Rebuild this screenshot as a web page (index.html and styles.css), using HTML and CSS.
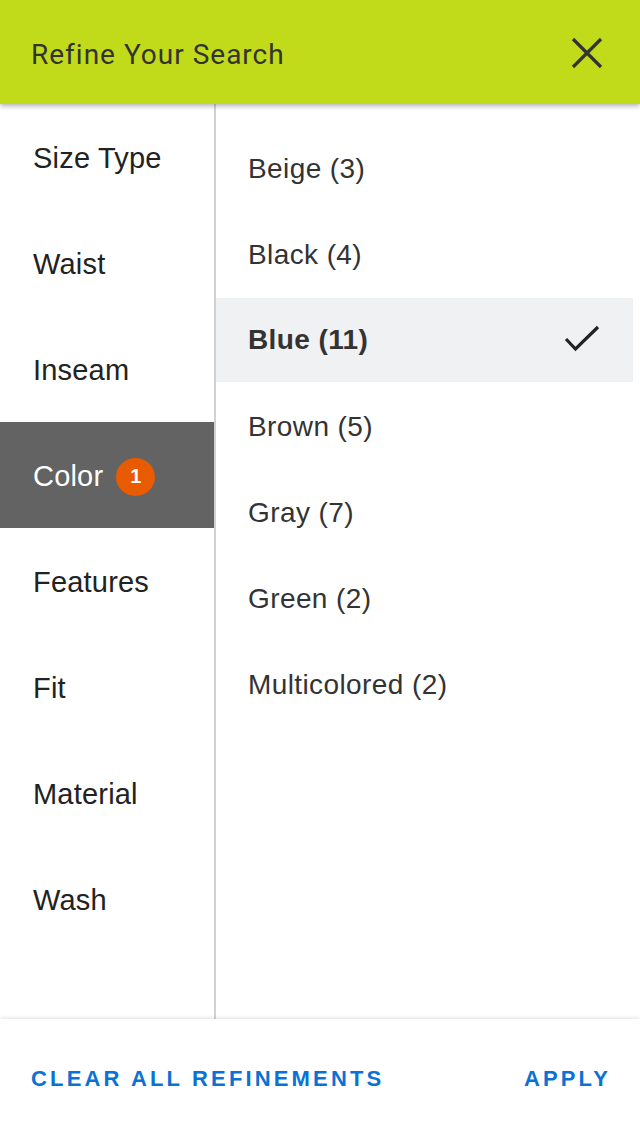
FILE: index.html
```html
<!DOCTYPE html>
<html>
<head>
<meta charset="utf-8">
<link rel="stylesheet" href="styles.css">
</head>
<body>
<div class="app">
  <header class="header">
    <h1 class="title">Refine Your Search</h1>
    <button class="close" aria-label="Close">
      <svg width="32" height="32" viewBox="0 0 32 32"><path d="M2 2 L30 30 M30 2 L2 30" stroke="#333" stroke-width="3.2" fill="none"/></svg>
    </button>
  </header>
  <main class="main">
    <nav class="cats">
      <div class="cat">Size Type</div>
      <div class="cat">Waist</div>
      <div class="cat">Inseam</div>
      <div class="cat active">Color <span class="badge">1</span></div>
      <div class="cat">Features</div>
      <div class="cat">Fit</div>
      <div class="cat">Material</div>
      <div class="cat">Wash</div>
    </nav>
    <section class="opts">
      <div class="opt">Beige (3)</div>
      <div class="opt">Black (4)</div>
      <div class="opt selected"><span>Blue (11)</span>
        <svg class="check" width="36" height="28" viewBox="0 0 36 28"><path d="M2 14 L11.5 24 L34 2" stroke="#222" stroke-width="3.2" fill="none"/></svg>
      </div>
      <div class="opt">Brown (5)</div>
      <div class="opt">Gray (7)</div>
      <div class="opt">Green (2)</div>
      <div class="opt">Multicolored (2)</div>
    </section>
  </main>
  <footer class="footer">
    <a class="action">CLEAR ALL REFINEMENTS</a>
    <a class="action">APPLY</a>
  </footer>
</div>
</body>
</html>
```
FILE: styles.css
```css
* { box-sizing: border-box; }
html, body { margin: 0; padding: 0; }
body {
  width: 640px;
  height: 1136px;
  font-family: "Liberation Sans", Arial, sans-serif;
  background: #fff;
  overflow: hidden;
}
.app {
  display: flex;
  flex-direction: column;
  height: 1136px;
}
.header {
  height: 104px;
  flex: none;
  background: #c1db1a;
  display: flex;
  align-items: center;
  justify-content: space-between;
  padding: 0 37px 0 31px;
  box-shadow: 0 2px 5px rgba(0,0,0,0.3);
  position: relative;
  z-index: 2;
}
.title {
  margin: 0;
  font-family: Roboto, "Liberation Sans", sans-serif;
  font-weight: 400;
  font-size: 28px;
  color: #333;
  letter-spacing: 1px;
  padding-top: 4px;
}
.close {
  border: 0;
  background: none;
  padding: 0;
  width: 32px;
  height: 32px;
  display: flex;
  margin-top: 1px;
}
.main {
  flex: 1;
  display: flex;
  min-height: 0;
}
.cats {
  width: 216px;
  flex: none;
  border-right: 2px solid #d2d2d2;
}
.cat {
  height: 106px;
  display: flex;
  align-items: center;
  padding-left: 33px;
  padding-top: 2px;
  font-size: 29px;
  color: #222;
  letter-spacing: 0.2px;
}
.cat.active {
  background: #636363;
  color: #fff;
}
.badge {
  display: inline-flex;
  align-items: center;
  justify-content: center;
  width: 39px;
  height: 38px;
  border-radius: 50%;
  background: #e85b00;
  color: #fff;
  font-size: 20px;
  font-weight: 700;
  margin-left: 13px;
  margin-top: 1px;
}
.opts {
  flex: 1;
  padding: 22px 7px 0 0;
}
.opt {
  height: 86px;
  display: flex;
  align-items: center;
  justify-content: space-between;
  padding: 0 33px 0 32px;
  font-size: 28px;
  letter-spacing: 0.4px;
  color: #333;
}
.opt.selected {
  background: #f0f1f3;
  font-weight: 700;
  height: 84px;
  margin: 0 0 2px;
}
.check { margin-top: -2px; }
.footer {
  height: 117px;
  flex: none;
  display: flex;
  align-items: center;
  justify-content: space-between;
  padding: 0 29px 0 31px;
  background: #fff;
  box-shadow: 0 -1px 4px rgba(0,0,0,0.12);
  position: relative;
  z-index: 2;
}
.action {
  font-size: 22px;
  font-weight: 700;
  color: #0a72d4;
  letter-spacing: 3.15px;
  padding-top: 2px;
}
```
